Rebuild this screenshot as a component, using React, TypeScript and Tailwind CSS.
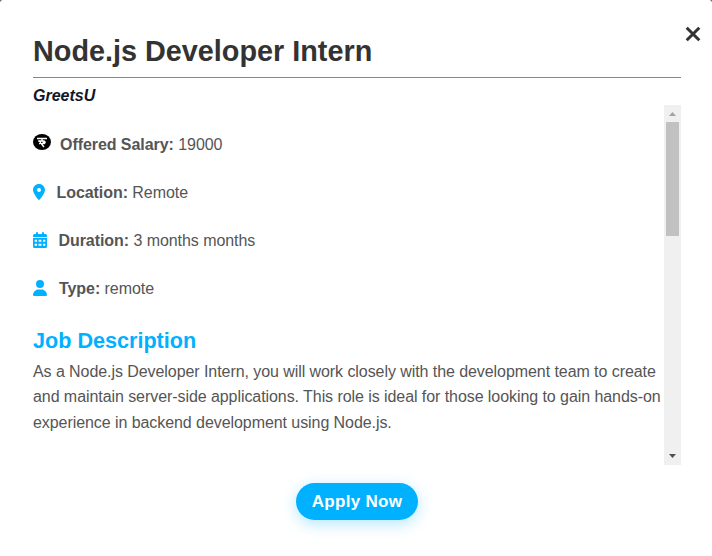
import type { ReactNode } from "react";
import { FaLocationDot, FaUser } from "react-icons/fa6";

function RupeeIcon() {
  return (
    <svg viewBox="0 0 18 16" className="mb-1 h-4 w-[18px]" fill="none">
      <ellipse cx="9" cy="8" rx="9" ry="8" fill="#000" />
      <path d="M4 4.5h10M9 4.5v2.2M5.2 7h5.1c2.2 0 2.2 2.6.2 2.6H8.3l2.6 3.4M5.2 7c3 0 3 2.6.8 2.6M9.5 8.2h3.3" stroke="#fff" strokeWidth="1.35" />
    </svg>
  );
}

function CalendarIcon() {
  return (
    <svg viewBox="0 0 14 16" className="h-4 w-3.5 text-[#00b1ff]" fill="currentColor">
      <path d="M3 1a1 1 0 0 1 2 0v1h4V1a1 1 0 0 1 2 0v1h1.5A1.5 1.5 0 0 1 14 3.5V5H0V3.5A1.5 1.5 0 0 1 1.5 2H3z" />
      <path fillRule="evenodd" d="M0 6h14v8.5a1.5 1.5 0 0 1-1.5 1.5h-11A1.5 1.5 0 0 1 0 14.500zM1.700 7.700v2.100h2.300V7.700zM5.600 7.700v2.100h2.800V7.700zM10 7.700v2.100h2.300V7.700zM1.700 11.700v2.100h2.300v-2.100zM5.600 11.700v2.100h2.800v-2.100zM10 11.700v2.100h2.300v-2.100z" />
    </svg>
  );
}

function Detail({ icon, label, value, gap }: { icon: ReactNode; label: string; value: string; gap: string }) {
  return (
    <div className={`flex h-12 items-center whitespace-nowrap text-base leading-[26px] tracking-[-0.06px] ${gap}`}>
      {icon}
      <p className="pt-0.5"><strong>{label}</strong> {value}</p>
    </div>
  );
}

export default function App() {
  return (
    <div className="relative h-[556px] w-[712px] overflow-hidden bg-[#555] font-['Liberation_Sans',Arial,sans-serif] text-[#555]">
      <main className="flex h-full flex-col rounded-t-[3px] bg-white pl-[33px] pr-[31px] pt-[33px]">
        <h1 className="h-[45px] shrink-0 border-b border-[#1aabeb] text-[28.8px] font-bold leading-9 text-[#333]">Node.js Developer Intern</h1>
        <h2 className="h-[27px] shrink-0 pt-[6px] text-base font-bold italic leading-6 text-[#0f172a]">GreetsU</h2>
        <div className="flex h-[360px] shrink-0">
          <section className="min-w-0 flex-1 pt-[15px]">
            <Detail icon={<RupeeIcon />} label="Offered Salary:" value="19000" gap="gap-[9px]" />
            <Detail icon={<FaLocationDot className="h-4 w-3 text-[#00b1ff]" />} label="Location:" value="Remote" gap="gap-[11.5px]" />
            <Detail icon={<CalendarIcon />} label="Duration:" value="3 months months" gap="gap-[11.5px]" />
            <Detail icon={<FaUser className="h-4 w-3.5 text-[#00b1ff]" />} label="Type:" value="remote" gap="gap-3" />
            <h3 className="pt-[15px] text-[21.6px] font-bold leading-[27px] text-[#00b1ff]">Job Description</h3>
            <p className="mt-[4.7px] whitespace-nowrap text-base leading-[25.6px] tracking-[-0.068px]">
              As a Node.js Developer Intern, you will work closely with the development team to create<br />
              and maintain server-side applications. This role is ideal for those looking to gain hands-on<br />
              experience in backend development using Node.js.
            </p>
          </section>
          <div className="flex w-[17px] flex-col items-center bg-[#f0f0f0]">
            <svg viewBox="0 0 17 17" className="h-[17px] w-[17px]"><path d="M5 11h7L8.5 7z" fill="#a3a3a3" /></svg>
            <div className="h-[114px] w-[13px] bg-[#c1c1c1]" />
            <svg viewBox="0 0 17 17" className="mt-auto h-[17px] w-[17px]"><path d="M5 6h7l-3.5 4z" fill="#505050" /></svg>
          </div>
        </div>
        <button className="mt-[18px] h-[37px] w-[122px] shrink-0 self-center rounded-full bg-[#00b1ff] text-[17px] font-bold tracking-[0.3px] text-white shadow-[0_4px_15px_rgba(0,177,255,0.3)]">Apply Now</button>
      </main>
      <button aria-label="Close" className="absolute left-[685px] top-[26px] text-[#333]">
        <svg viewBox="0 0 16 16" className="h-4 w-4"><path d="m1.700 1.700 12.600 12.600M14.300 1.700 1.700 14.300" stroke="currentColor" strokeWidth="3" /></svg>
      </button>
    </div>
  );
}
